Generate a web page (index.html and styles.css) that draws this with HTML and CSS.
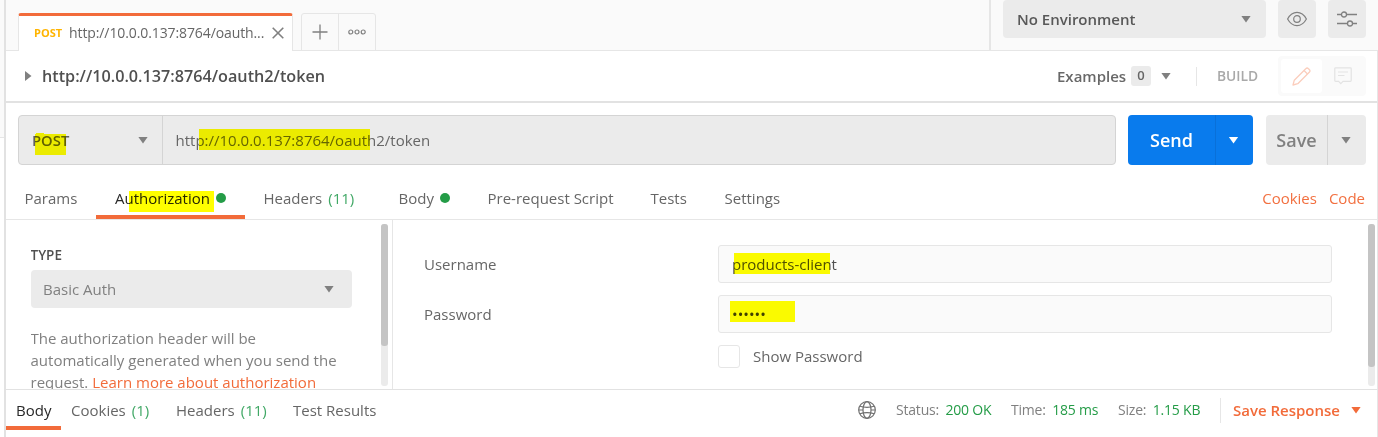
FILE: index.html
```html
<!DOCTYPE html>
<html lang="en">
<head>
<meta charset="utf-8">
<title>Request builder</title>
<link rel="stylesheet" href="styles.css">
</head>
<body>
<div class="app">
  <div class="gutter"></div>
  <main class="main">
    <header class="topbar">
      <div class="tabs">
        <div class="tab"><span class="tab-method">POST</span><span class="tab-name">http://10.0.0.137:8764/oauth...</span>
          <svg class="tab-close" width="12" height="12" viewBox="0 0 12 12"><path d="M.7.7l10.6 10.6M11.3.7L.7 11.3" stroke="#808080" stroke-width="1.6" fill="none"/></svg>
        </div>
        <div class="tab-actions">
          <div class="tab-action"><svg width="16" height="16" viewBox="0 0 16 16"><path d="M8 .5v15M.5 8h15" stroke="#808080" stroke-width="1.3"/></svg></div>
          <div class="tab-action"><svg width="18" height="6" viewBox="0 0 18 6"><g fill="none" stroke="#808080" stroke-width="1.2"><circle cx="2.8" cy="3" r="2"/><circle cx="9" cy="3" r="2"/><circle cx="15.2" cy="3" r="2"/></g></svg></div>
        </div>
      </div>
      <div class="env">
        <div class="env-select"><span class="t-env">No Environment</span><i class="caret"></i></div>
        <div class="env-btn"><svg width="20" height="16" viewBox="0 0 20 16"><g fill="none" stroke="#808080" stroke-width="1.2"><path d="M.6 8C3 3.600 6.200 1.400 10 1.400S17 3.600 19.400 8C17 12.400 13.800 14.600 10 14.600S3 12.400.6 8z"/><circle cx="10" cy="8" r="3.300"/></g></svg></div>
        <div class="env-btn"><svg width="20" height="16" viewBox="0 0 20 16"><g fill="none" stroke="#808080" stroke-width="1.300"><path d="M0 3.500h4.300M9.700 3.500H20M0 12.500h10.300M15.700 12.500H20"/><circle cx="7" cy="3.500" r="2.500"/><circle cx="13" cy="12.500" r="2.500"/></g></svg></div>
      </div>
    </header>

    <section class="titlebar">
      <svg class="expander" width="7" height="10" viewBox="0 0 7 10"><path d="M0 0l6.500 5L0 10z" fill="#808080"/></svg>
      <h1 class="title">http://10.0.0.137:8764/oauth2/token</h1>
      <span class="examples">Examples</span><span class="badge">0</span><i class="caret examples-caret"></i>
      <span class="divider"></span>
      <span class="build">BUILD</span>
      <div class="modes">
        <div class="mode mode-active"><svg width="19" height="19" viewBox="0 0 19 19"><g fill="none" stroke="#fbcdbc" stroke-width="1.300" stroke-linejoin="round"><path d="M1 18l1.300-4.800L14 1.500a1.500 1.500 0 0 1 2.200 0l1.300 1.300a1.500 1.500 0 0 1 0 2.200L5.800 16.700z"/><path d="M12 3.500L15.500 7"/></g></svg></div>
        <div class="mode"><svg width="18" height="18" viewBox="0 0 18 18"><g fill="none" stroke="#e3e3e3" stroke-width="1.200"><path d="M1.600.8h14.800q.8 0 .8.800v12q0 .8-.8.800H9l-2.200 2.300-2.200-2.300h-3q-.8 0-.8-.8v-12q0-.8.800-.8z"/><path d="M4 5h10M4 8.500h6.500"/></g></svg></div>
      </div>
    </section>

    <section class="request">
      <div class="urlbar">
        <div class="method"><span class="marked">POST<b class="mark mark-post-top"></b><b class="mark mark-post"></b></span><i class="caret"></i></div>
        <div class="url"><span class="marked t-url">http://10.0.0.137:8764/oauth2/token<b class="mark mark-url"></b></span></div>
      </div>
      <div class="split send"><span class="split-label">Send</span><span class="split-drop"><i class="caret"></i></span></div>
      <div class="split save"><span class="split-label">Save</span><span class="split-drop"><i class="caret"></i></span></div>
    </section>

    <nav class="reqtabs">
      <div class="rt rt-params"><span>Params</span></div>
      <div class="rt rt-auth"><span class="marked">Authorization<b class="mark mark-auth"></b></span><i class="dot"></i></div>
      <div class="rt rt-headers"><span>Headers</span><span class="count">(11)</span></div>
      <div class="rt rt-body"><span>Body</span><i class="dot"></i></div>
      <div class="rt rt-pre"><span>Pre-request Script</span></div>
      <div class="rt rt-tests"><span>Tests</span></div>
      <div class="rt rt-settings"><span>Settings</span></div>
      <div class="links"><span>Cookies</span><span>Code</span></div>
    </nav>

    <section class="auth">
      <div class="auth-side">
        <div class="auth-info">
          <div class="type-label">TYPE</div>
          <div class="type-select"><span>Basic Auth</span><i class="caret"></i></div>
          <p class="help">The authorization header will be<br>automatically generated when you send the<br>request. <a class="help-link">Learn more about authorization</a></p>
        </div>
        <div class="scroll"><div class="thumb thumb-side"></div></div>
      </div>
      <div class="auth-form">
        <div class="fields">
          <label class="label">Username</label>
          <div class="input"><span class="marked">products-client<b class="mark mark-user"></b></span></div>
          <label class="label">Password</label>
          <div class="input"><span class="marked password">••••••<b class="mark mark-pass"></b></span></div>
          <div class="show"><span class="checkbox"></span><span>Show Password</span></div>
        </div>
        <div class="scroll"><div class="thumb thumb-form"></div></div>
      </div>
    </section>

    <footer class="response">
      <div class="res res-body"><span>Body</span></div>
      <div class="res res-cookies"><span>Cookies</span><span class="count">(1)</span></div>
      <div class="res res-headers"><span>Headers</span><span class="count">(11)</span></div>
      <div class="res res-tests"><span>Test Results</span></div>
      <div class="meta">
        <svg class="globe" width="18" height="18" viewBox="0 0 18 18"><g fill="none" stroke="#707070" stroke-width="1.200"><circle cx="9" cy="9" r="8.300"/><ellipse cx="9" cy="9" rx="4" ry="8.300"/><path d="M1.800 5.300Q9 7.500 16.200 5.300M1.800 12.700Q9 10.500 16.200 12.700M.7 9h4.300M13 9h4.300"/></g></svg>
        <div class="stat stat-status">Status: <em>200 OK</em></div>
        <div class="stat stat-time">Time: <em>185 ms</em></div>
        <div class="stat stat-size">Size: <em>1.15 KB</em></div>
        <div class="save-response"><span>Save Response</span><i class="caret"></i></div>
      </div>
    </footer>
  </main>
</div>
</body>
</html>
```
FILE: styles.css
```css
* { box-sizing: border-box; }
body { margin: 0; background: #fff; color: #666; font: 15px/20px "Open Sans", "Noto Sans", sans-serif; overflow: hidden; }
.app { display: flex; width: 1378px; height: 437px; }
.gutter { width: 4px; height: 138px; background: #fafafa; border-bottom: 1px solid #e6e6e6; flex: none; }
.main { width: 1374px; border-left: 2px solid #e2e2e2; display: flex; flex-direction: column; }
span, .stat { white-space: nowrap; }
.caret { width: 10px; height: 7px; background: #808080; clip-path: polygon(0 0, 100% 0, 50% 100%); flex: none; }

.topbar { height: 51px; flex: none; display: flex; justify-content: space-between; background: #fafafa; box-shadow: inset 0 -1px #e6e6e6; }
.tabs { display: flex; align-items: flex-end; padding-left: 12px; }
.tab { width: 275px; height: 38px; background: #fff; border: 1px solid #e6e6e6; border-top: 3px solid #f26b3a; border-bottom: 0; border-radius: 3px 3px 0 0; display: flex; align-items: center; padding: 0 7px 2px 15px; }
.tab-method { width: 35px; font-size: 11px; font-weight: 700; color: #ffb400; }
.tab-name { font-size: 14px; width: 203px; letter-spacing: -.1px; }
.tab-close { flex: none; }
.tab-actions { display: flex; height: 38px; margin-left: 8px; border: 1px solid #e6e6e6; border-radius: 3px 3px 0 0; }
.tab-action { width: 36px; display: flex; align-items: center; justify-content: center; }
.tab-action + .tab-action { border-left: 1px solid #e6e6e6; width: 37px; }
.env { width: 389px; height: 50px; border-left: 2px solid #e6e6e6; display: flex; padding-left: 12px; gap: 12px; }
.env-select { width: 263px; height: 38px; background: #ebebeb; border-radius: 4px; display: flex; align-items: center; justify-content: space-between; padding: 0 15px 0 14px; font-weight: 600; color: #585858; }
.env-btn { width: 38px; height: 38px; background: #ebebeb; border-radius: 4px; display: flex; align-items: center; justify-content: center; padding-bottom: 1px; }

.titlebar { height: 52px; flex: none; border-bottom: 2px solid #e2e2e2; border-right: 1px solid #e6e6e6; display: flex; align-items: center; padding: 0 11px 0 19px; }
.expander { flex: none; }
.title { margin: 0 auto 0 10px; font-size: 16.200px; font-weight: 600; color: #505050; white-space: nowrap; }
.examples { width: 74px; font-weight: 600; color: #686868; }
.badge { width: 20px; height: 20px; border-radius: 3px; background: #ebebeb; font-size: 13px; font-weight: 600; text-align: center; line-height: 19px; }
.examples-caret { margin-left: 10px; }
.divider { width: 1px; height: 19px; background: #e6e6e6; margin-left: 25px; }
.build { margin-left: 20px; width: 61px; font-size: 13.800px; font-weight: 600; color: #a9a9a9; }
.modes { width: 88px; height: 40px; background: #fafafa; border-radius: 4px; padding: 3px; display: flex; flex: none; }
.mode { width: 41px; display: flex; align-items: center; justify-content: center; }
.mode-active { background: #fff; border-radius: 3px; }

.request { height: 74px; flex: none; display: flex; padding: 12px 11px 12px 12px; border-right: 1px solid #e6e6e6; }
.urlbar { width: 1098px; height: 50px; background: #ebebeb; border: 1px solid #d4d4d4; border-radius: 4px; display: flex; flex: none; }
.method { width: 144px; border-right: 1px solid #d4d4d4; display: flex; align-items: center; justify-content: space-between; padding: 0 14px 0 13px; font-weight: 600; color: #606060; font-size: 14.800px; }
.url { display: flex; align-items: center; padding-left: 12.500px; }
.marked { position: relative; }
.mark { position: absolute; background: #ff0; mix-blend-mode: multiply; }
.mark-post { left: 3px; top: 4px; width: 31px; height: 21px; }
.mark-post-top { left: 4px; top: 3px; width: 8px; height: 1px; }
.mark-url { left: 23.500px; top: -1px; width: 171px; height: 21px; }
.mark-auth { left: 14px; top: 3px; width: 85px; height: 21px; }
.mark-user { left: 2px; top: -1px; width: 96px; height: 21px; }
.mark-pass { left: -2px; top: -3px; width: 65px; height: 21px; }
.split { height: 50px; border-radius: 4px; display: flex; margin-left: 12px; font-size: 18px; font-weight: 600; flex: none; }
.split-label { display: flex; align-items: center; justify-content: center; }
.split-drop { display: flex; align-items: center; justify-content: center; flex: 1; padding-right: 2px; }
.send { width: 125px; background: #097bed; color: #fff; }
.send .split-label { width: 88px; border-right: 1px solid #0970d9; }
.send .caret { background: #fff; }
.save { width: 100px; margin-left: 13px; background: #ebebeb; color: #808080; }
.save .split-label { width: 62px; border-right: 1px solid #d4d4d4; }

.reqtabs { height: 43px; flex: none; display: flex; border-bottom: 1px solid #e6e6e6; border-right: 1px solid #e6e6e6; }
.rt { height: 42px; display: flex; align-items: center; }
.dot { width: 10px; height: 10px; border-radius: 50%; background: #249c47; flex: none; margin-left: 6px; }
.count { color: #41a866; margin-left: 6px; }
.rt-params { width: 90px; padding-left: 18.500px; }
.rt-auth { width: 149px; padding-left: 19px; border-bottom: 4px solid #f26b3a; padding-top: 4px; color: #282828; }
.rt-auth .marked { top: 0; }
.rt-headers { width: 135px; padding-left: 18.500px; }
.rt-body { width: 89px; padding-left: 18.500px; }
.rt-pre { width: 163px; padding-left: 18.500px; }
.rt-tests { width: 74px; padding-left: 18.500px; }
.rt-settings { padding-left: 18.500px; }
.links { margin-left: auto; display: flex; align-items: center; gap: 12px; padding-right: 12px; color: #f27040; }

.auth { height: 169px; flex: none; display: flex; border-right: 1px solid #e6e6e6; }
.auth-side { width: 387px; border-right: 1px solid #e6e6e6; display: flex; justify-content: space-between; padding: 4px 4px 3px 24.500px; }
.auth-info { width: 321.500px; height: 165px; overflow: hidden; }
.type-label { margin-top: 21px; font-size: 13.500px; font-weight: 600; color: #505050; }
.type-select { margin-top: 5px; height: 38px; background: #ebebeb; border-radius: 4px; display: flex; align-items: center; justify-content: space-between; padding: 0 18px 0 12.500px; color: #808080; }
.help { margin: 19px 0 0; line-height: 22px; color: #808080; white-space: nowrap; }
.help-link { color: #f26b3a; }
.scroll { width: 7px; height: 162px; border-radius: 3px; background: #ebebeb; flex: none; }
.thumb { background: #c4c4c4; border-radius: 3px; }
.thumb-side { height: 122px; }
.thumb-form { height: 143px; }
.auth-form { flex: 1; display: flex; justify-content: space-between; padding: 4px 2px 3px 31px; }
.fields { display: grid; grid-template-columns: 294px 614px; grid-template-rows: 38px 38px 24px; row-gap: 12px; padding-top: 21px; align-items: center; height: 162px; }
.input { height: 38px; border: 1px solid #e6e6e6; border-radius: 3px; background: #fafafa; display: flex; align-items: center; padding-left: 13px; color: #505050; }
.password { color: #404040; }
.show { grid-column: 2; display: flex; align-items: center; gap: 13px; margin-top: -2px; }
.checkbox { width: 22px; height: 23px; border: 1px solid #e6e6e6; border-radius: 3px; }

.response { height: 48px; flex: none; border-top: 1px solid #e2e2e2; border-right: 1px solid #e6e6e6; display: flex; }
.res { height: 40px; display: flex; align-items: center; }
.res-body { width: 55px; padding-left: 10px; border-bottom: 4px solid #f26b3a; padding-top: 4px; color: #282828; }
.res-cookies { width: 105px; padding-left: 10px; }
.res-headers { width: 117px; padding-left: 10px; }
.res-tests { padding-left: 10px; }
.meta { margin-left: auto; width: 519px; height: 40px; display: flex; align-items: center; font-size: 14px; letter-spacing: -.2px; color: #808080; }
.globe { width: 18px; margin-right: 20px; }
.stat em { font-style: normal; color: #249c47; margin-left: 3px; }
.stat-status { width: 115px; }
.stat-time { width: 107px; }
.stat-size { width: 102px; }
.save-response { height: 25px; border-left: 1px solid #e6e6e6; padding-left: 12px; display: flex; align-items: center; gap: 11px; font-size: 15px; letter-spacing: 0; font-weight: 600; color: #f26b3a; }
.save-response .caret { background: #f26b3a; }
```
